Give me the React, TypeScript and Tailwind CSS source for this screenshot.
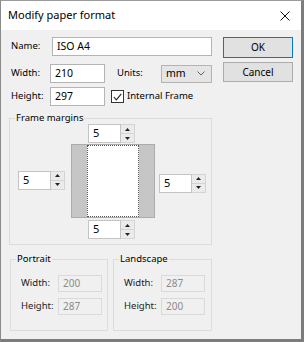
import type { FC } from "react";

const font = { fontFamily: '"Noto Sans", "Open Sans", sans-serif' };

const Spin: FC<{ value: string; className?: string }> = ({ value, className }) => (
  <div className={"flex h-[19px] w-[47px] " + (className ?? "")}>
    <div className="flex w-[33px] items-center border border-[#c4c4c4] bg-white pl-[4px] text-[11px] text-black">
      {value}
    </div>
    <div className="flex w-[14px] flex-col border border-l-0 border-[#d4d4d4] bg-[#ebebeb]">
      <div className="flex flex-1 items-center justify-center border-b border-[#d4d4d4]">
        <svg width="5" height="3" viewBox="0 0 5 3">
          <path d="M2.5 0 L5 3 L0 3 Z" fill="#222" />
        </svg>
      </div>
      <div className="flex flex-1 items-center justify-center">
        <svg width="5" height="3" viewBox="0 0 5 3">
          <path d="M0 0 L5 0 L2.5 3 Z" fill="#222" />
        </svg>
      </div>
    </div>
  </div>
);

const Field: FC<{ value: string; className?: string }> = ({ value, className }) => (
  <div
    className={
      "flex h-[19px] items-center border border-[#b4b4b4] bg-white pl-[4px] text-[10.5px] text-black " +
      (className ?? "")
    }
  >
    {value}
  </div>
);

const Disabled: FC<{ value: string }> = ({ value }) => (
  <div className="flex h-[17px] w-[44px] items-center border border-[#dadada] pl-[4px] text-[10px] text-[#8c8c8c]">
    {value}
  </div>
);

const SizeGroup: FC<{ title: string; w: string; h: string; className?: string }> = ({
  title,
  w,
  h,
  className,
}) => (
  <fieldset className={"border border-[#dcdcdc] pb-[15px] " + (className ?? "")}>
    <legend className="ml-[5px] px-[1px] text-[9.5px] leading-[12px] text-black">{title}</legend>
    <div className="mt-[10px] flex flex-col gap-[6px] pl-[10px]">
      <div className="flex items-center">
        <span className="w-[37px] text-[9.5px] text-[#222]">Width:</span>
        <Disabled value={w} />
      </div>
      <div className="flex items-center">
        <span className="w-[37px] text-[9.5px] text-[#222]">Height:</span>
        <Disabled value={h} />
      </div>
    </div>
  </fieldset>
);

const App: FC = () => {
  return (
    <div
      style={font}
      className="flex h-[342px] w-[304px] flex-col border-t border-l border-r-[3px] border-b-[3px] border-t-[#9a9a9a] border-l-[#8a8a8a] border-r-[#7c7c7c] border-b-[#7c7c7c] bg-[#f0f0f0] text-[9.5px] text-black"
    >
      {/* title bar */}
      <div className="flex h-[29px] items-center justify-between bg-white pl-[7px] pr-[11px]">
        <span className="text-[11px] text-black">Modify paper format</span>
        <svg width="10" height="10" viewBox="0 0 10 10">
          <path d="M0.5 0.5 L9.5 9.5 M9.5 0.5 L0.5 9.5" stroke="#111" strokeWidth="1" />
        </svg>
      </div>

      <div className="flex flex-row">
        {/* left column */}
        <div className="flex w-[213px] flex-col pl-[8px]">
          <div className="mt-[7px] flex items-center">
            <span className="w-[43px] pl-[2px]">Name:</span>
            <Field value="ISO A4" className="w-[160px]" />
          </div>

          <div className="mt-[8px] flex items-center">
            <span className="w-[41px] pl-[2px]">Width:</span>
            <Field value="210" className="w-[55px]" />
            <span className="ml-[12px] w-[44px]">Units:</span>
            <div className="flex h-[18px] w-[51px] items-center justify-between border border-[#b4b4b4] bg-[#e5e5e5] pl-[4px] pr-[6px] text-[10.5px]">
              <span>mm</span>
              <svg width="8" height="5" viewBox="0 0 8 5">
                <path d="M0.5 0.5 L4 4 L7.5 0.5" stroke="#666" fill="none" strokeWidth="1" />
              </svg>
            </div>
          </div>

          <div className="mt-[4px] flex items-center">
            <span className="w-[41px] pl-[2px]">Height:</span>
            <Field value="297" className="w-[55px]" />
            <div className="ml-[6px] flex h-[13px] w-[13px] items-center justify-center border border-[#333] bg-white">
              <svg width="9" height="8" viewBox="0 0 9 8">
                <path d="M0.8 4 L3.3 6.8 L8.3 0.8" stroke="#222" fill="none" strokeWidth="1.1" />
              </svg>
            </div>
            <span className="ml-[3px] text-[9.5px]">Internal Frame</span>
          </div>

          {/* frame margins */}
          <fieldset className="mt-[6px] w-[203px] border border-[#dcdcdc] pb-[5px]">
            <legend className="ml-[5px] px-[1px] text-[9.5px] leading-[12px]">Frame margins</legend>
            <div className="flex items-center pl-[8px]">
              <Spin value="5" className="mt-[-3px]" />
              <div className="ml-[6px] flex flex-col">
                <Spin value="5" className="ml-[17px]" />
                <div className="mt-[1px] flex h-[74px] w-[84px] border border-[#acacac] bg-[#c6c6c6]">
                  <div className="ml-[15px] h-full w-[52px] border border-dotted border-[#555] bg-white" />
                </div>
                <Spin value="5" className="ml-[17px] mt-[2px] h-[18px]" />
              </div>
              <Spin value="5" className="ml-[4px] mt-[3px]" />
            </div>
          </fieldset>

          <div className="mt-[8px] flex">
            <SizeGroup title="Portrait" w="200" h="287" className="ml-[1px] w-[98px]" />
            <SizeGroup title="Landscape" w="287" h="200" className="ml-[5px] w-[99px]" />
          </div>
        </div>

        {/* buttons */}
        <div className="ml-[9px] mt-[7px] flex flex-col gap-[4px]">
          <div className="flex h-[21px] w-[70px] items-center justify-center border border-[#0078d7] bg-[#e1e1e1] text-[10px]">
            OK
          </div>
          <div className="flex h-[20px] w-[70px] items-center justify-center border border-[#adadad] bg-[#e1e1e1] text-[10px]">
            Cancel
          </div>
        </div>
      </div>
    </div>
  );
};

export default App;
